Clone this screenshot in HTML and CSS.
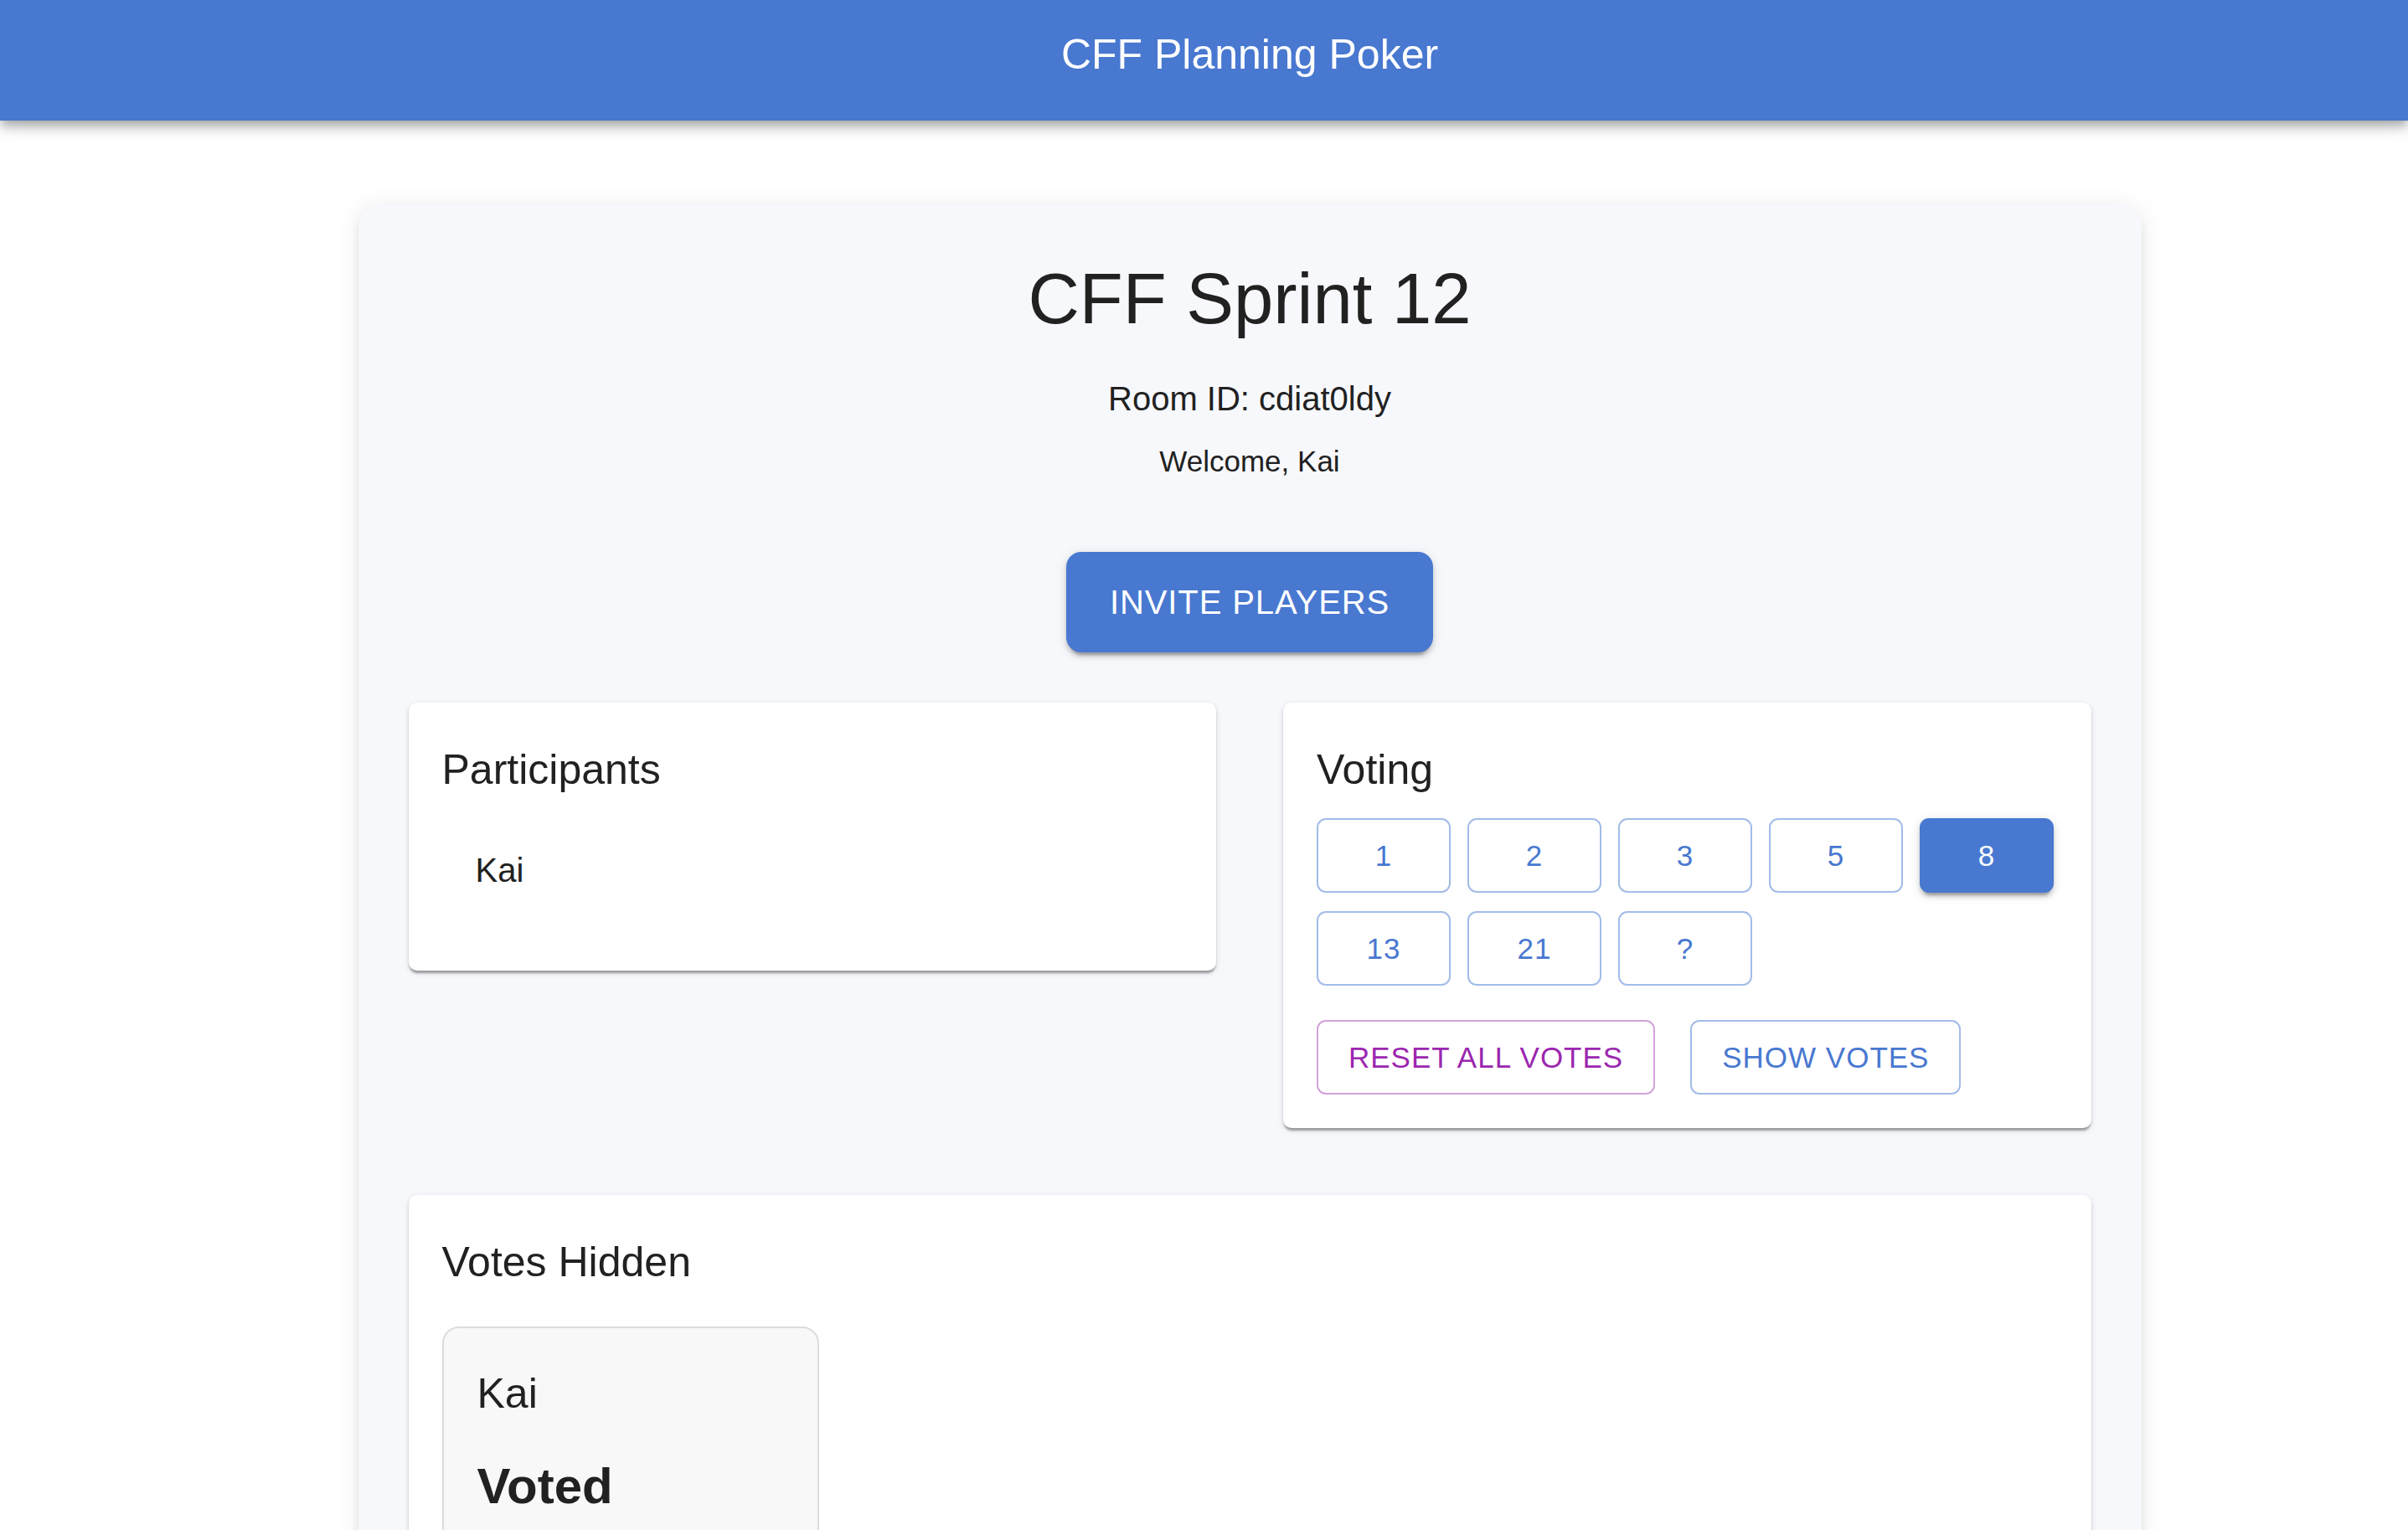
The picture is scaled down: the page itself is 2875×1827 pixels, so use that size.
FILE: index.html
```html
<!DOCTYPE html>
<html lang="en">
<head>
<meta charset="utf-8">
<title>CFF Planning Poker</title>
<link rel="stylesheet" href="styles.css">
</head>
<body>
<header class="appbar">
  <div class="appbar-inner">
    <div class="app-title">CFF Planning Poker</div>
  </div>
</header>
<main class="page">
  <section class="room">
    <h1 class="room-title">CFF Sprint 12</h1>
    <p class="room-id">Room ID: cdiat0ldy</p>
    <p class="welcome">Welcome, Kai</p>
    <div class="invite-row">
      <button class="btn btn-contained btn-large">INVITE PLAYERS</button>
    </div>
    <div class="grid">
      <div class="card">
        <h2 class="card-title">Participants</h2>
        <ul class="list">
          <li class="list-item"><span class="list-text">Kai</span></li>
        </ul>
      </div>
      <div class="card">
        <h2 class="card-title">Voting</h2>
        <div class="vote-grid">
          <button class="btn btn-outlined vote">1</button>
          <button class="btn btn-outlined vote">2</button>
          <button class="btn btn-outlined vote">3</button>
          <button class="btn btn-outlined vote">5</button>
          <button class="btn btn-contained vote">8</button>
          <button class="btn btn-outlined vote">13</button>
          <button class="btn btn-outlined vote">21</button>
          <button class="btn btn-outlined vote">?</button>
        </div>
        <div class="actions">
          <button class="btn btn-outlined btn-secondary action">RESET ALL VOTES</button>
          <button class="btn btn-outlined action">SHOW VOTES</button>
        </div>
      </div>
    </div>
    <div class="card results">
      <h2 class="card-title">Votes Hidden</h2>
      <div class="vote-cards">
        <div class="vote-card">
          <div class="vote-name">Kai</div>
          <div class="vote-status">Voted</div>
        </div>
      </div>
    </div>
  </section>
</main>
</body>
</html>
```

FILE: styles.css
```css
html, body {
  margin: 0;
  padding: 0;
  background: #ffffff;
  font-family: "Liberation Sans", Arial, sans-serif;
  color: #212121;
}

.appbar {
  height: 144px;
  background: #4878d0;
  box-shadow: 0 5px 10px -2.5px rgba(0,0,0,0.2), 0 10px 12.5px 0 rgba(0,0,0,0.14), 0 2.5px 25px 0 rgba(0,0,0,0.12);
  position: relative;
  z-index: 2;
}

.appbar-inner {
  padding: 25px 0 0 109px;
  text-align: center;
}

.app-title {
  font-size: 50px;
  line-height: 80px;
  color: #ffffff;
}

.page {
  padding: 100px 0 0 109px;
}

.room {
  box-sizing: border-box;
  width: 2129px;
  margin: 0 auto;
  padding: 60px 60px 200px;
  background: #f7f8fb;
  border-radius: 25px;
  box-shadow: 0 7.5px 7.5px -5px rgba(0,0,0,0.12), 0 7.5px 10px 0 rgba(0,0,0,0.08), 0 2.5px 30px 0 rgba(0,0,0,0.08);
}

.room-title {
  margin: 0;
  font-size: 85px;
  line-height: 105px;
  font-weight: 400;
  text-align: center;
}

.room-id {
  margin: 37px 0 0;
  font-size: 40px;
  line-height: 60px;
  text-align: center;
}

.welcome {
  margin: 20px 0 0;
  font-size: 35px;
  line-height: 50px;
  text-align: center;
}

.invite-row {
  display: flex;
  justify-content: center;
  margin-top: 83px;
}

.btn {
  font-family: "Liberation Sans", Arial, sans-serif;
  box-sizing: border-box;
  border-radius: 11px;
  cursor: pointer;
  text-align: center;
  letter-spacing: 1px;
}

.btn-contained {
  background: #4878d0;
  color: #ffffff;
  border: none;
  box-shadow: 0 7.5px 2.5px -5px rgba(0,0,0,0.2), 0 5px 5px 0 rgba(0,0,0,0.14), 0 2.5px 12.5px 0 rgba(0,0,0,0.12);
}

.btn-large {
  width: 438px;
  height: 120px;
  font-size: 40px;
  letter-spacing: 0.9px;
  border-radius: 18px;
}

.btn-outlined {
  background: #ffffff;
  color: #4878d0;
  border: 2px solid #a3bce8;
}

.btn-secondary {
  color: #9c27b0;
  border-color: #d3a2db;
}

.grid {
  display: grid;
  grid-template-columns: 1fr 1fr;
  column-gap: 80px;
  align-items: start;
  margin-top: 60px;
}

.card {
  background: #ffffff;
  border-radius: 10px;
  padding: 40px;
  box-shadow: 0 5px 2.5px -2.5px rgba(0,0,0,0.2), 0 2.5px 2.5px 0 rgba(0,0,0,0.14), 0 2.5px 7.5px 0 rgba(0,0,0,0.12);
}

.card-title {
  margin: 0;
  font-size: 50px;
  line-height: 80px;
  font-weight: 400;
}

.list {
  list-style: none;
  margin: 0;
  padding: 20px 0;
}

.list-item {
  padding: 20px 40px;
}

.list-text {
  display: block;
  margin: 10px 0;
  font-size: 40px;
  line-height: 60px;
}

.vote-grid {
  display: flex;
  flex-wrap: wrap;
  column-gap: 20px;
  row-gap: 22px;
  margin-top: 18px;
}

.vote {
  width: 160px;
  height: 89px;
  font-size: 35px;
  line-height: 50px;
}

.actions {
  display: flex;
  gap: 42px;
  margin-top: 41px;
}

.action {
  height: 89px;
  padding: 0 36px;
  font-size: 35px;
  line-height: 50px;
}

.results {
  margin-top: 80px;
  padding-bottom: 200px;
}

.vote-cards {
  display: flex;
  margin-top: 37px;
}

.vote-card {
  box-sizing: border-box;
  width: 450px;
  padding: 38px 40px 200px;
  background: #f8f8f8;
  border: 2px solid #dcdcdc;
  border-radius: 20px;
}

.vote-name {
  font-size: 50px;
  line-height: 80px;
}

.vote-status {
  margin-top: 31px;
  font-size: 60px;
  line-height: 80px;
  font-weight: 700;
}
```
